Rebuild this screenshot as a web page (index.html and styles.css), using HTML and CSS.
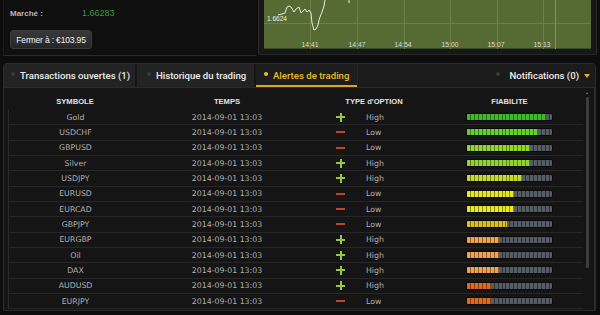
FILE: index.html
```html
<!DOCTYPE html>
<html lang="fr">
<head>
<meta charset="utf-8">
<title>Alertes de trading</title>
<link rel="stylesheet" href="styles.css">
</head>
<body>
<div class="top">
  <div class="info">
    <div class="market"><span class="lbl">Marché :</span><span class="val">1.66283</span></div>
    <button class="close-btn">Fermer à : €103.95</button>
  </div>
  <div class="chart-frame">
    <div class="plot">
      <svg class="chart" width="327" height="49" viewBox="0 0 327 49">
        <g class="grid">
          <line x1="0" y1="23.5" x2="327" y2="23.5"/>
          <line x1="46.5" y1="0" x2="46.5" y2="49"/>
          <line x1="93.5" y1="0" x2="93.5" y2="49"/>
          <line x1="140.5" y1="0" x2="140.5" y2="49"/>
          <line x1="186.5" y1="0" x2="186.5" y2="49"/>
          <line x1="233.5" y1="0" x2="233.5" y2="49"/>
          <line x1="279.5" y1="0" x2="279.5" y2="49"/>
        </g>
        <line class="now" x1="291.5" y1="0" x2="291.5" y2="49"/>
        <polyline class="price" points="14,15 18,14 21,13 23,7 25,6 27,7 30,12 32,9 35,7 37,13 40,10 41,9 43,12 45,10 47,13 48,23 50,30 52,29 54,25 55,20 56,17 58,12 60,6 61,0"/>
        <polyline class="price" points="85,0 85,3"/>
        <text class="plabel" x="3" y="21">1.6624</text>
        <g class="axis">
          <text x="46" y="47">14:41</text>
          <text x="93" y="47">14:47</text>
          <text x="139" y="47">14:54</text>
          <text x="186" y="47">15:00</text>
          <text x="232" y="47">15:07</text>
          <text x="278" y="47">15:13</text>
        </g>
      </svg>
    </div>
  </div>
</div>

<div class="panel">
  <div class="tabs">
    <div class="tab t1"><span class="dot"></span>Transactions ouvertes (1)</div>
    <div class="tab t2"><span class="dot"></span>Historique du trading</div>
    <div class="tab t3 active"><span class="dot"></span>Alertes de trading</div>
    <div class="notif"><span class="dot"></span>Notifications (0)<span class="caret"></span></div>
  </div>
  <div class="body">
    <div class="table">
      <div class="thead">
        <div class="c-sym">SYMBOLE</div>
        <div class="c-time">TEMPS</div>
        <div class="c-type">TYPE d'OPTION</div>
        <div class="c-fia">FIABILITE</div>
      </div>
      <div class="rows">
        <div class="row"><div class="c-sym">Gold</div><div class="c-time">2014-09-01 13:03</div><div class="c-type"><span class="sign plus"></span><span class="dir">High</span></div><div class="c-fia"><div class="bar"><div class="fill l1" style="width:79px"></div></div></div></div>
        <div class="row"><div class="c-sym">USDCHF</div><div class="c-time">2014-09-01 13:03</div><div class="c-type"><span class="sign minus"></span><span class="dir">Low</span></div><div class="c-fia"><div class="bar"><div class="fill l2" style="width:71px"></div></div></div></div>
        <div class="row"><div class="c-sym">GBPUSD</div><div class="c-time">2014-09-01 13:03</div><div class="c-type"><span class="sign minus"></span><span class="dir">Low</span></div><div class="c-fia"><div class="bar"><div class="fill l3" style="width:63px"></div></div></div></div>
        <div class="row"><div class="c-sym">Silver</div><div class="c-time">2014-09-01 13:03</div><div class="c-type"><span class="sign plus"></span><span class="dir">High</span></div><div class="c-fia"><div class="bar"><div class="fill l3" style="width:63px"></div></div></div></div>
        <div class="row"><div class="c-sym">USDJPY</div><div class="c-time">2014-09-01 13:03</div><div class="c-type"><span class="sign plus"></span><span class="dir">High</span></div><div class="c-fia"><div class="bar"><div class="fill l4" style="width:55px"></div></div></div></div>
        <div class="row"><div class="c-sym">EURUSD</div><div class="c-time">2014-09-01 13:03</div><div class="c-type"><span class="sign minus"></span><span class="dir">Low</span></div><div class="c-fia"><div class="bar"><div class="fill l5" style="width:47px"></div></div></div></div>
        <div class="row"><div class="c-sym">EURCAD</div><div class="c-time">2014-09-01 13:03</div><div class="c-type"><span class="sign minus"></span><span class="dir">Low</span></div><div class="c-fia"><div class="bar"><div class="fill l5" style="width:47px"></div></div></div></div>
        <div class="row"><div class="c-sym">GBPJPY</div><div class="c-time">2014-09-01 13:03</div><div class="c-type"><span class="sign minus"></span><span class="dir">Low</span></div><div class="c-fia"><div class="bar"><div class="fill l6" style="width:40px"></div></div></div></div>
        <div class="row"><div class="c-sym">EURGBP</div><div class="c-time">2014-09-01 13:03</div><div class="c-type"><span class="sign plus"></span><span class="dir">High</span></div><div class="c-fia"><div class="bar"><div class="fill l7" style="width:32px"></div></div></div></div>
        <div class="row"><div class="c-sym">Oil</div><div class="c-time">2014-09-01 13:03</div><div class="c-type"><span class="sign plus"></span><span class="dir">High</span></div><div class="c-fia"><div class="bar"><div class="fill l7" style="width:32px"></div></div></div></div>
        <div class="row"><div class="c-sym">DAX</div><div class="c-time">2014-09-01 13:03</div><div class="c-type"><span class="sign plus"></span><span class="dir">High</span></div><div class="c-fia"><div class="bar"><div class="fill l7" style="width:32px"></div></div></div></div>
        <div class="row"><div class="c-sym">AUDUSD</div><div class="c-time">2014-09-01 13:03</div><div class="c-type"><span class="sign plus"></span><span class="dir">High</span></div><div class="c-fia"><div class="bar"><div class="fill l8" style="width:24px"></div></div></div></div>
        <div class="row"><div class="c-sym">EURJPY</div><div class="c-time">2014-09-01 13:03</div><div class="c-type"><span class="sign minus"></span><span class="dir">Low</span></div><div class="c-fia"><div class="bar"><div class="fill l8" style="width:24px"></div></div></div></div>
      </div>
    </div>
    <div class="scroll">
      <span class="arrow"></span>
      <div class="thumb"></div>
    </div>
  </div>
</div>
</body>
</html>
```

FILE: styles.css
```css
* { box-sizing: border-box; }
html, body {
  margin: 0;
  padding: 0;
  background: #0d0d0d;
  width: 600px;
  height: 315px;
  overflow: hidden;
  font-family: "DejaVu Sans", Verdana, sans-serif;
}

/* ---------- top area ---------- */
.top {
  display: flex;
  height: 57px;
}
.info {
  width: 253px;
  margin-left: 3px;
  height: 56px;
  border-left: 1px solid #1c1c1c;
  border-bottom: 1px solid #2a2a2a;
  background: #0f0f0f;
  padding: 8px 0 0 6px;
}
.market {
  display: flex;
  align-items: center;
  height: 10px;
}
.market .lbl {
  width: 72px;
  font-family: "Liberation Sans", Arial, sans-serif;
  font-weight: bold;
  font-size: 8px;
  color: #b8b8b8;
}
.market .val {
  font-family: "Liberation Sans", Arial, sans-serif;
  font-size: 9px;
  color: #3c9a36;
}
.close-btn {
  display: block;
  margin-top: 12px;
  width: 82px;
  height: 19px;
  padding: 0;
  border: 1px solid #3a3a3a;
  border-radius: 3px;
  background: linear-gradient(#393939, #262626);
  color: #f0f0f0;
  font-family: "Liberation Sans", Arial, sans-serif;
  font-size: 8.6px;
  letter-spacing: -0.2px;
  text-align: center;
}
.chart-frame {
  margin-left: 2px;
  width: 339px;
  height: 55px;
  background: #171717;
  border-left: 1px solid #2a2a2a;
  border-right: 1px solid #262626;
  border-bottom: 1px solid #262626;
  padding: 0 7px 0 5px;
}
.plot {
  width: 327px;
  height: 49px;
  background: #566a34;
  border-bottom: 1px solid #3e4c26;
}
.chart { display: block; }
.grid line { stroke: #6e8049; stroke-width: 1; }
.now { stroke: #c97a1e; stroke-width: 1; }
.price { fill: none; stroke: #e8ecdc; stroke-width: 1; stroke-linejoin: round; }
.plabel {
  fill: #eef0e6;
  font-family: "Liberation Sans", Arial, sans-serif;
  font-size: 6.5px;
}
.axis text {
  fill: #d9ddcc;
  font-family: "Liberation Sans", Arial, sans-serif;
  font-size: 6.8px;
  text-anchor: middle;
}

/* ---------- panel ---------- */
.panel {
  margin: 6px 4px 0 3px;
  height: 248px;
  border: 1px solid #2c2c2c;
  border-radius: 4px 4px 0 0;
  background: #151515;
  overflow: hidden;
}
.tabs {
  display: flex;
  align-items: stretch;
  height: 24px;
  background: #1b1b1b;
  border-bottom: 1px solid #2a2a2a;
  border-radius: 3px 3px 0 0;
  font-family: Roboto, "Liberation Sans", sans-serif;
  font-weight: 500;
  font-size: 9.6px;
  color: #ececec;
}
.tab {
  display: flex;
  align-items: center;
  background: #232323;
  border-right: 2px solid #151515;
  padding-left: 7px;
}
.t1 { width: 133px; }
.t2 { width: 119px; padding-left: 10px; }
.t3 { width: 102px; padding-left: 8px; }
.tab.active {
  background: #1d1d1d;
  color: #e9bf22;
  border-right: 1px solid #262626;
  box-shadow: inset 0 -2px 0 #d9a81c;
}
.dot {
  width: 4px;
  height: 4px;
  border-radius: 50%;
  background: #3a3a3a;
  margin-right: 5px;
  margin-top: -3px;
}
.active .dot { background: #f0c020; }
.notif {
  margin-left: auto;
  display: flex;
  align-items: center;
  padding-right: 5px;
}
.notif .dot { margin-right: 9px; }
.caret {
  width: 0;
  height: 0;
  border-left: 3px solid transparent;
  border-right: 3px solid transparent;
  border-top: 4px solid #e2b21c;
  margin-left: 5px;
}

.body {
  display: flex;
  height: 222px;
  overflow: hidden;
}
.table {
  margin-left: 4px;
  width: 575px;
}
.thead, .row {
  display: flex;
  align-items: center;
}
.thead {
  height: 22px;
  padding-top: 4px;
  font-family: "Liberation Sans", Arial, sans-serif;
  font-weight: bold;
  font-size: 7.6px;
  color: #e2e2e2;
}
.rows { border-left: 1px solid #2a2a2a; }
.row {
  height: 15.333px;
  border-bottom: 1px solid #272727;
  font-size: 7.8px;
  color: #b0b0b0;
}
.c-sym { width: 134px; text-align: center; }
.c-time { width: 170px; text-align: center; }
.c-type { width: 124px; text-align: center; }
.c-fia { width: 147px; display: flex; justify-content: center; }
.rows .c-sym { width: 133px; }
.row .c-type {
  display: flex;
  align-items: center;
  text-align: left;
  padding-left: 24px;
}
.sign {
  position: relative;
  width: 9px;
  height: 9px;
  margin-right: 21px;
}
.sign::before, .sign::after {
  content: "";
  position: absolute;
  background: #93c840;
}
.sign::before { left: 0; top: 3.5px; width: 9px; height: 2px; }
.plus::after { left: 3.5px; top: 0; width: 2px; height: 9px; }
.minus::before { background: #c4402e; }
.minus::after { display: none; }
.dir { font-size: 7.8px; }

.bar {
  width: 87px;
  height: 8px;
  border-radius: 2px;
  border: 1px solid #0a0a0a;
  background-color: #555c64;
  background-image: repeating-linear-gradient(90deg, transparent 0 2.95px, rgba(0,0,0,.45) 2.95px 3.95px);
  overflow: hidden;
}
.fill {
  height: 100%;
  background-image: repeating-linear-gradient(90deg, transparent 0 2.95px, rgba(0,0,0,.4) 2.95px 3.95px);
}
.l1 { background-color: #3fb82a; }
.l2 { background-color: #62d22e; }
.l3 { background-color: #92d62c; }
.l4 { background-color: #c6dc2a; }
.l5 { background-color: #e8e81e; }
.l6 { background-color: #dfbd1c; }
.l7 { background-color: #f0a24e; }
.l8 { background-color: #e2691c; }

.scroll {
  position: relative;
  width: 12px;
  border-right: 1px solid #2c2c2c;
}
.arrow {
  position: absolute;
  left: 3px;
  top: 4px;
  width: 0;
  height: 0;
  border-left: 1.5px solid transparent;
  border-right: 1.5px solid transparent;
  border-bottom: 2px solid #7a7a7a;
}
.thumb {
  position: absolute;
  left: 3px;
  top: 9px;
  width: 3px;
  height: 171px;
  background: #3c3c3c;
  border-radius: 1px;
}
```
